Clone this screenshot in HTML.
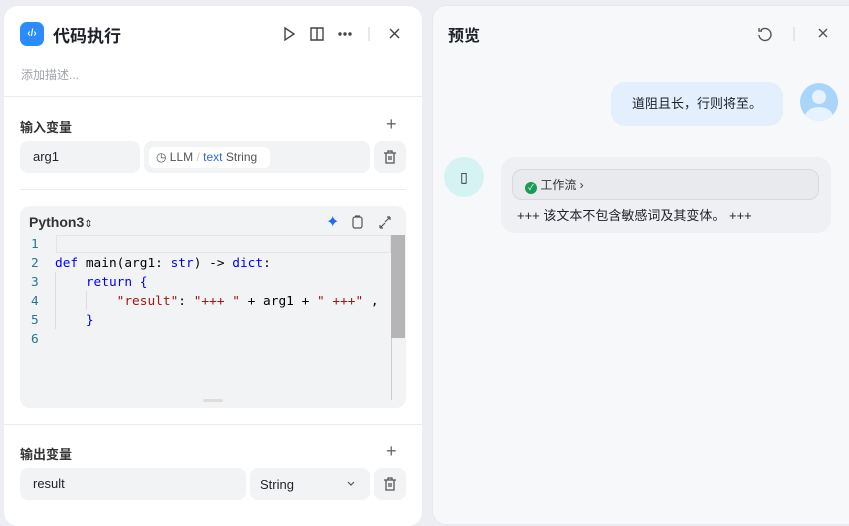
<!DOCTYPE html>
<html><head><meta charset="utf-8"><style>
*{box-sizing:border-box;margin:0;padding:0}
body{width:849px;height:513px;overflow:hidden;background:#eceef3;font-family:"Liberation Sans","Noto Sans CJK SC",sans-serif;position:relative;color:#1d2129}
.abs{position:absolute}
.lp{left:4px;top:6px;width:418px;height:520px;background:#fff;border-radius:14px}
.rp{left:432px;top:5px;width:430px;height:520px;background:#f7f8fa;border-radius:14px;border:1px solid #e6e8ee}
.box{background:#f2f3f5;border-radius:8px}
.code{font-family:"DejaVu Sans Mono",monospace;font-size:12.8px;line-height:19px}
.code div{height:19px;white-space:pre}
.ln{color:#237893}
.kw{color:#0000ff}.st{color:#a31515}
</style></head><body>
<div class="abs lp"></div>
<div class="abs rp"></div>

<div class="abs" style="left:20px;top:22px;width:24px;height:24px;background:#2b8cff;border-radius:7px;color:#fff;font-size:10px;font-weight:bold;text-align:center;line-height:24px">‹/›</div>
<div class="abs" style="left:53px;top:22px;font-size:17px;font-weight:bold">代码执行</div>
<svg class="abs" style="left:280px;top:25px" width="120" height="18" fill="none" stroke="#444" stroke-width="1.4">
<path d="M5 3 L14 9 L5 15 Z"/>
<path d="M31 3 H43 V15 H31 Z M37 3 V15"/>
<circle cx="60" cy="9" r="1" fill="#444"/><circle cx="65" cy="9" r="1" fill="#444"/><circle cx="70" cy="9" r="1" fill="#444"/>
<path d="M89 2 V16" stroke="#ddd"/>
<path d="M110 4 L119 13 M119 4 L110 13"/>
</svg>
<div class="abs" style="left:21px;top:66px;font-size:12px;color:#a0a4ab">添加描述...</div>
<div class="abs" style="left:4px;top:96px;width:418px;height:1px;background:#ececef"></div>

<div class="abs" style="left:20px;top:117px;font-size:13px;font-weight:bold;color:#333">输入变量</div>
<div class="abs" style="left:386px;top:114px;font-size:18px;color:#666">+</div>
<div class="abs box" style="left:20px;top:141px;width:120px;height:32px"></div>
<div class="abs" style="left:33px;top:149px;font-size:13px">arg1</div>
<div class="abs box" style="left:144px;top:141px;width:226px;height:32px"></div>
<div class="abs" style="left:149px;top:147px;width:121px;height:21px;background:#fff;border-radius:5px;font-size:12px;line-height:21px;padding-left:7px;color:#555">◷ LLM <span style="color:#ccc">/</span> <span style="color:#2b6cd4">text</span> String</div>
<div class="abs box" style="left:374px;top:141px;width:32px;height:32px"></div>
<svg class="abs" style="left:382px;top:149px" width="16" height="16" fill="none" stroke="#555" stroke-width="1.3"><path d="M2 4 H14 M6 4 V2 H10 V4 M4 4 V14 H12 V4 M7 7 V11 M9 7 V11"/></svg>
<div class="abs" style="left:20px;top:189px;width:386px;height:1px;background:#ececef"></div>

<div class="abs box" style="left:20px;top:206px;width:386px;height:202px;border-radius:10px"></div>
<div class="abs" style="left:29px;top:214px;font-size:14px;font-weight:bold;color:#333">Python3<span style="font-size:10px;font-weight:normal">⇕</span></div>
<div class="abs" style="left:326px;top:212px;font-size:16px;color:#1a6cf0">✦</div>
<svg class="abs" style="left:350px;top:214px" width="50" height="16" fill="none" stroke="#555" stroke-width="1.2"><rect x="3" y="3" width="9" height="11" rx="2"/><path d="M5 2 H10"/><path d="M30 14 L35 9 M30 14 H33 M30 14 V11 M40 3 L35 8 M40 3 H37 M40 3 V6"/></svg>
<div class="abs" style="left:56px;top:235px;width:335px;height:18px;border:1px solid #e4e5e8"></div>
<div class="abs" style="left:391px;top:235px;width:14px;height:103px;background:#b5b5b5"></div>
<div class="abs" style="left:391px;top:338px;width:1px;height:62px;background:#ccc"></div>
<div class="abs" style="left:203px;top:399px;width:20px;height:3px;background:#ddd;border-radius:2px"></div>
<div class="abs" style="left:55px;top:272px;width:1px;height:57px;background:#ddd"></div>
<div class="abs" style="left:86px;top:291px;width:1px;height:19px;background:#ddd"></div>
<div class="abs code" style="left:31px;top:235px"><div class="ln">1</div><div class="ln">2</div><div class="ln">3</div><div class="ln">4</div><div class="ln">5</div><div class="ln">6</div></div>
<div class="abs code" style="left:55px;top:235px;color:#000;width:336px;overflow:hidden"><div> </div><div><span class="kw">def</span> main(arg1: <span class="kw">str</span>) -> <span class="kw">dict</span>:</div><div>    <span class="kw">return</span> <span class="kw">{</span></div><div>        <span class="st">"result"</span>: <span class="st">"+++ "</span> + arg1 + <span class="st">" +++"</span> ,</div><div>    <span class="kw">}</span></div><div> </div></div>

<div class="abs" style="left:4px;top:424px;width:418px;height:1px;background:#ececef"></div>
<div class="abs" style="left:20px;top:444px;font-size:13px;font-weight:bold;color:#333">输出变量</div>
<div class="abs" style="left:386px;top:441px;font-size:18px;color:#666">+</div>
<div class="abs box" style="left:20px;top:468px;width:226px;height:32px"></div>
<div class="abs" style="left:33px;top:476px;font-size:13px">result</div>
<div class="abs box" style="left:250px;top:468px;width:120px;height:32px"></div>
<div class="abs" style="left:260px;top:477px;font-size:13px">String</div>
<svg class="abs" style="left:346px;top:480px" width="10" height="8" fill="none" stroke="#555" stroke-width="1.2"><path d="M2 2 L5 5 L8 2"/></svg>
<div class="abs box" style="left:374px;top:468px;width:32px;height:32px"></div>
<svg class="abs" style="left:382px;top:476px" width="16" height="16" fill="none" stroke="#555" stroke-width="1.3"><path d="M2 4 H14 M6 4 V2 H10 V4 M4 4 V14 H12 V4 M7 7 V11 M9 7 V11"/></svg>

<div class="abs" style="left:448px;top:22px;font-size:16px;font-weight:bold">预览</div>
<svg class="abs" style="left:756px;top:25px" width="80" height="18" fill="none" stroke="#555" stroke-width="1.4">
<path d="M5 5 A6 6 0 1 1 3 10 M3 3 V6 H6"/>
<path d="M38 2 V16" stroke="#ddd"/>
<path d="M63 4 L71 12 M71 4 L63 12"/>
</svg>
<div class="abs" style="left:611px;top:82px;width:172px;height:44px;background:#e3effd;border-radius:14px;font-size:13px;text-align:center;line-height:44px">道阻且长，行则将至。</div>
<div class="abs" style="left:800px;top:83px;width:38px;height:38px;border-radius:50%;background:#a9d5fb;overflow:hidden">
<div class="abs" style="left:12px;top:7px;width:14px;height:14px;border-radius:50%;background:#e6f3fe"></div>
<div class="abs" style="left:5px;top:24px;width:28px;height:20px;border-radius:50%;background:#e6f3fe"></div></div>
<div class="abs" style="left:444px;top:157px;width:40px;height:40px;border-radius:50%;background:#d6f3f3;text-align:center;line-height:40px;font-size:14px">▯</div>
<div class="abs" style="left:501px;top:157px;width:330px;height:76px;background:#eff0f3;border-radius:14px"></div>
<div class="abs" style="left:512px;top:169px;width:307px;height:31px;background:#e9eaee;border:1px solid #d8d9de;border-radius:10px;font-size:12px;line-height:30px;padding-left:12px;color:#333"><span style="display:inline-block;width:12px;height:12px;border-radius:50%;background:#1a9c55;color:#fff;font-size:8px;line-height:12px;text-align:center;vertical-align:-1px">✓</span> 工作流 ›</div>
<div class="abs" style="left:517px;top:205px;font-size:13px">+++ 该文本不包含敏感词及其变体。 +++</div>
</body></html>
